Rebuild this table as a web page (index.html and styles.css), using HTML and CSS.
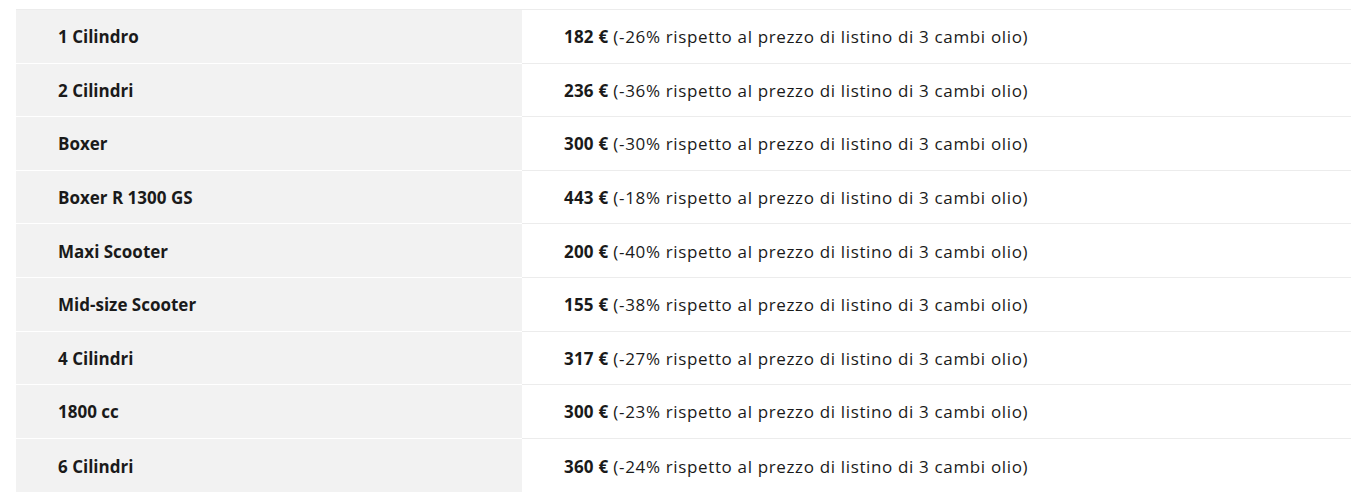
FILE: index.html
```html
<!DOCTYPE html>
<html lang="it">
<head>
<meta charset="utf-8">
<title>Prezzi</title>
<link rel="stylesheet" href="styles.css">
</head>
<body>
<div class="wrap">
<table class="prices">
<tbody>
<tr><th>1 Cilindro</th><td><b>182 €</b> (-26% rispetto al prezzo di listino di 3 cambi olio)</td></tr>
<tr><th>2 Cilindri</th><td><b>236 €</b> (-36% rispetto al prezzo di listino di 3 cambi olio)</td></tr>
<tr><th>Boxer</th><td><b>300 €</b> (-30% rispetto al prezzo di listino di 3 cambi olio)</td></tr>
<tr><th>Boxer R 1300 GS</th><td><b>443 €</b> (-18% rispetto al prezzo di listino di 3 cambi olio)</td></tr>
<tr><th>Maxi Scooter</th><td><b>200 €</b> (-40% rispetto al prezzo di listino di 3 cambi olio)</td></tr>
<tr><th>Mid-size Scooter</th><td><b>155 €</b> (-38% rispetto al prezzo di listino di 3 cambi olio)</td></tr>
<tr><th>4 Cilindri</th><td><b>317 €</b> (-27% rispetto al prezzo di listino di 3 cambi olio)</td></tr>
<tr><th>1800 cc</th><td><b>300 €</b> (-23% rispetto al prezzo di listino di 3 cambi olio)</td></tr>
<tr><th>6 Cilindri</th><td><b>360 €</b> (-24% rispetto al prezzo di listino di 3 cambi olio)</td></tr>
</tbody>
</table>
</div>
</body>
</html>
```
FILE: styles.css
```css
html, body {
  margin: 0;
  padding: 0;
  background: #fff;
}
.wrap {
  padding: 9px 0 0 16px;
}
.prices {
  width: 1335px;
  border-collapse: separate;
  border-spacing: 0;
  font-family: "Open Sans", "Liberation Sans", sans-serif;
  font-size: 17px;
  color: #1a1a1a;
  border-top: 1px solid #ececec;
}
.prices th,
.prices td {
  height: 53.6px;
  padding: 1px 42px 0;
  vertical-align: middle;
  text-align: left;
  box-sizing: border-box;
}
.prices th {
  width: 506px;
  background: #f2f2f2;
  font-weight: 700;
  border-bottom: 1px solid #fff;
}
.prices td {
  font-weight: 400;
  letter-spacing: 0.65px;
  border-bottom: 1px solid #ececec;
}
.prices tr:last-child th,
.prices tr:last-child td {
  border-bottom: none;
}
.prices b {
  font-weight: 700;
  letter-spacing: 0.2px;
}
```
